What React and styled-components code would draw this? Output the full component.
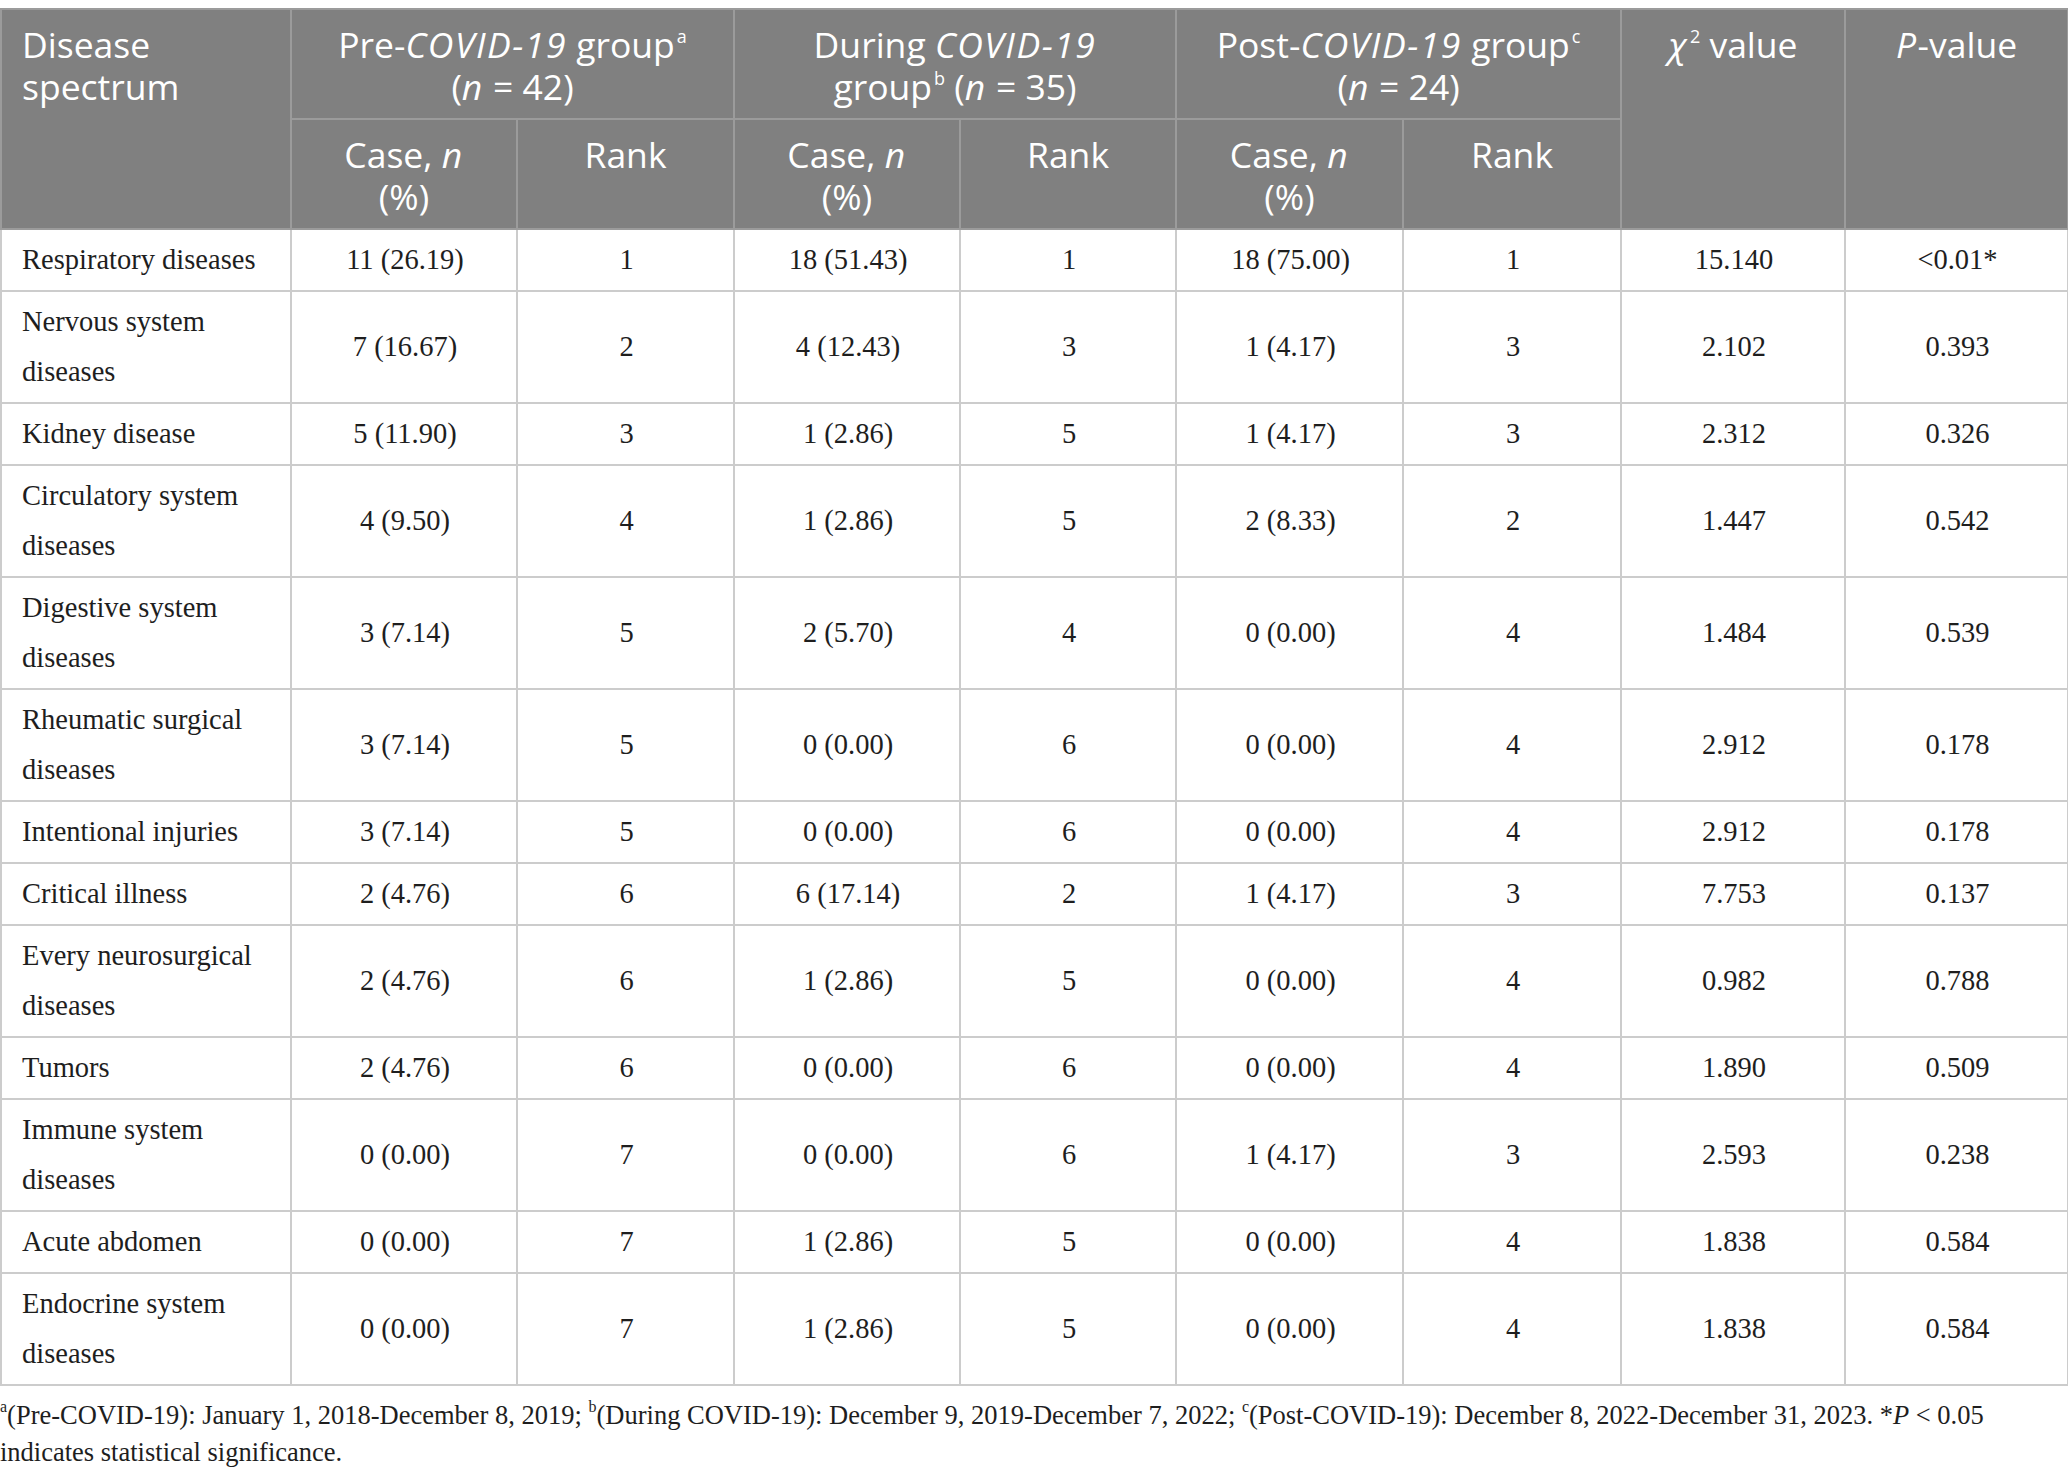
import React from "react";
import styled, { createGlobalStyle } from "styled-components";

const rows = [
  ["Respiratory diseases", "11 (26.19)", "1", "18 (51.43)", "1", "18 (75.00)", "1", "15.140", "<0.01*"],
  ["Nervous system diseases", "7 (16.67)", "2", "4 (12.43)", "3", "1 (4.17)", "3", "2.102", "0.393"],
  ["Kidney disease", "5 (11.90)", "3", "1 (2.86)", "5", "1 (4.17)", "3", "2.312", "0.326"],
  ["Circulatory system diseases", "4 (9.50)", "4", "1 (2.86)", "5", "2 (8.33)", "2", "1.447", "0.542"],
  ["Digestive system diseases", "3 (7.14)", "5", "2 (5.70)", "4", "0 (0.00)", "4", "1.484", "0.539"],
  ["Rheumatic surgical diseases", "3 (7.14)", "5", "0 (0.00)", "6", "0 (0.00)", "4", "2.912", "0.178"],
  ["Intentional injuries", "3 (7.14)", "5", "0 (0.00)", "6", "0 (0.00)", "4", "2.912", "0.178"],
  ["Critical illness", "2 (4.76)", "6", "6 (17.14)", "2", "1 (4.17)", "3", "7.753", "0.137"],
  ["Every neurosurgical diseases", "2 (4.76)", "6", "1 (2.86)", "5", "0 (0.00)", "4", "0.982", "0.788"],
  ["Tumors", "2 (4.76)", "6", "0 (0.00)", "6", "0 (0.00)", "4", "1.890", "0.509"],
  ["Immune system diseases", "0 (0.00)", "7", "0 (0.00)", "6", "1 (4.17)", "3", "2.593", "0.238"],
  ["Acute abdomen", "0 (0.00)", "7", "1 (2.86)", "5", "0 (0.00)", "4", "1.838", "0.584"],
  ["Endocrine system diseases", "0 (0.00)", "7", "1 (2.86)", "5", "0 (0.00)", "4", "1.838", "0.584"],
];

const widths = [290, 226, 217, 226, 216, 227, 218, 224, 223];

const App = () => {
  return (
    <Page>
      <GlobalStyle />
      <Table>
        <colgroup>
          {widths.map((w, i) => (
            <Col key={i} $w={w} />
          ))}
        </colgroup>
        <thead>
          <HeadRow>
            <HeadCell rowSpan={2} $left>
              Disease
              <br />
              spectrum
            </HeadCell>
            <HeadCell colSpan={2}>
              Pre-<Em>COVID-19</Em> group<Sup>a</Sup>
              <br />(<Em>n</Em> = 42)
            </HeadCell>
            <HeadCell colSpan={2}>
              During <Em>COVID-19</Em>
              <br />
              group<Sup>b</Sup> (<Em>n</Em> = 35)
            </HeadCell>
            <HeadCell colSpan={2}>
              Post-<Em>COVID-19</Em> group<Sup>c</Sup>
              <br />(<Em>n</Em> = 24)
            </HeadCell>
            <HeadCell rowSpan={2}>
              <Em>χ</Em>
              <Sup>2</Sup> value
            </HeadCell>
            <HeadCell rowSpan={2}>
              <Em>P</Em>-value
            </HeadCell>
          </HeadRow>
          <HeadRow>
            <HeadCell>
              Case, <Em>n</Em>
              <br />
              (%)
            </HeadCell>
            <HeadCell>Rank</HeadCell>
            <HeadCell>
              Case, <Em>n</Em>
              <br />
              (%)
            </HeadCell>
            <HeadCell>Rank</HeadCell>
            <HeadCell>
              Case, <Em>n</Em>
              <br />
              (%)
            </HeadCell>
            <HeadCell>Rank</HeadCell>
          </HeadRow>
        </thead>
        <tbody>
          {rows.map((r) => (
            <tr key={r[0]}>
              {r.map((v, i) => (
                <Cell key={i} $left={i === 0}>
                  {v}
                </Cell>
              ))}
            </tr>
          ))}
        </tbody>
      </Table>
      <Note>
        <NoteSup>a</NoteSup>(Pre-COVID-19): January 1, 2018-December 8, 2019;{" "}
        <NoteSup>b</NoteSup>(During COVID-19): December 9, 2019-December 7, 2022;{" "}
        <NoteSup>c</NoteSup>(Post-COVID-19): December 8, 2022-December 31, 2023. *<i>P</i> &lt; 0.05
        <br />
        indicates statistical significance.
      </Note>
    </Page>
  );
};

export default App;

const GlobalStyle = createGlobalStyle`
  body {
    margin: 0;
    background: #fff;
  }
`;

const Page = styled.div`
  padding-top: 8px;
  width: 2068px;
`;

const Table = styled.table`
  width: 2067px;
  table-layout: fixed;
  border-collapse: collapse;
  border: 2px solid #c8c8c8;
`;

const Col = styled.col`
  width: ${(p) => p.$w}px;
`;

const HeadRow = styled.tr`
  height: 110px;
`;

const HeadCell = styled.th`
  background: #808080;
  color: #fff;
  font-family: "Open Sans", "Noto Sans", sans-serif;
  font-weight: 400;
  font-size: 35.5px;
  line-height: 42px;
  text-align: ${(p) => (p.$left ? "left" : "center")};
  vertical-align: top;
  padding: 13px 10px 11px ${(p) => (p.$left ? "20px" : "10px")};
  border: 2px solid #9b9b9b;
  white-space: nowrap;
`;

const Em = styled.i`
  letter-spacing: 1.5px;
`;

const Sup = styled.sup`
  font-size: 18px;
  line-height: 0;
  vertical-align: 15px;
  margin-left: 2px;
`;

const Cell = styled.td`
  font-family: "Liberation Serif", "Times New Roman", serif;
  font-size: 28.5px;
  line-height: 50px;
  color: #1e1e1e;
  text-align: ${(p) => (p.$left ? "left" : "center")};
  vertical-align: middle;
  padding: 5px 18px 5px 20px;
  border: 2px solid #cccccc;
`;

const Note = styled.p`
  margin: 11px 0 0;
  font-family: "Liberation Serif", "Times New Roman", serif;
  font-size: 26.5px;
  line-height: 37px;
  color: #1e1e1e;
`;

const NoteSup = styled.sup`
  font-size: 16px;
  line-height: 0;
  vertical-align: 12px;
`;
